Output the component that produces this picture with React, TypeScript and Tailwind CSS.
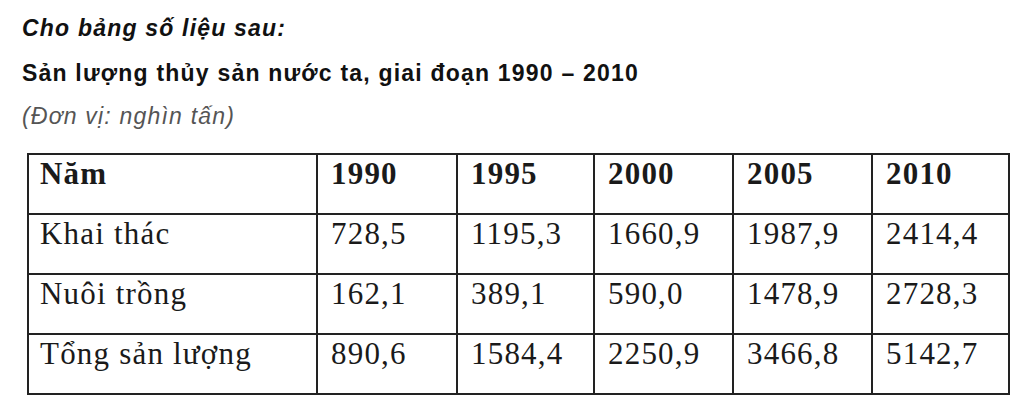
const rows = [
  { name: 'Khai thác', values: ['728,5', '1195,3', '1660,9', '1987,9', '2414,4'] },
  { name: 'Nuôi trồng', values: ['162,1', '389,1', '590,0', '1478,9', '2728,3'] },
  { name: 'Tổng sản lượng', values: ['890,6', '1584,4', '2250,9', '3466,8', '5142,7'] },
];

const years = ['1990', '1995', '2000', '2005', '2010'];

export default function App() {
  return (
    <div className="min-h-[410px] bg-white pl-[22px] pt-[16px]">
      <div className="font-['Liberation_Sans',Arial,sans-serif] text-[23px] leading-[24px] tracking-[1.2px] text-[#111]">
        <p className="font-bold italic">Cho bảng số liệu sau:</p>
        <p className="mt-[21px] font-bold">Sản lượng thủy sản nước ta, giai đoạn 1990 – 2010</p>
        <p className="mt-[19px] italic text-[#555]">(Đơn vị: nghìn tấn)</p>
      </div>

      <table className="ml-[5px] mt-[25px] w-[981px] table-fixed border-collapse font-['Liberation_Serif','Times_New_Roman',serif] text-[31px] leading-[34px] tracking-[1.2px] text-[#1a1a1a]">
        <colgroup>
          <col className="w-[289px]" />
          <col className="w-[140px]" />
          <col className="w-[137px]" />
          <col className="w-[139px]" />
          <col className="w-[139px]" />
          <col className="w-[137px]" />
        </colgroup>
        <thead>
          <tr className="h-[60px]">
            <th className="border-2 border-[#222] pl-[11px] pt-[2px] text-left align-top font-bold">Năm</th>
            {years.map((y) => (
              <th key={y} className="border-2 border-[#222] pl-[13px] pt-[2px] text-left align-top font-bold">
                {y}
              </th>
            ))}
          </tr>
        </thead>
        <tbody>
          {rows.map((row) => (
            <tr key={row.name} className="h-[60px]">
              <td className="border-2 border-[#222] pl-[11px] pt-[2px] align-top">{row.name}</td>
              {row.values.map((v, i) => (
                <td key={i} className="border-2 border-[#222] pl-[13px] pt-[2px] align-top">
                  {v}
                </td>
              ))}
            </tr>
          ))}
        </tbody>
      </table>
    </div>
  );
}
